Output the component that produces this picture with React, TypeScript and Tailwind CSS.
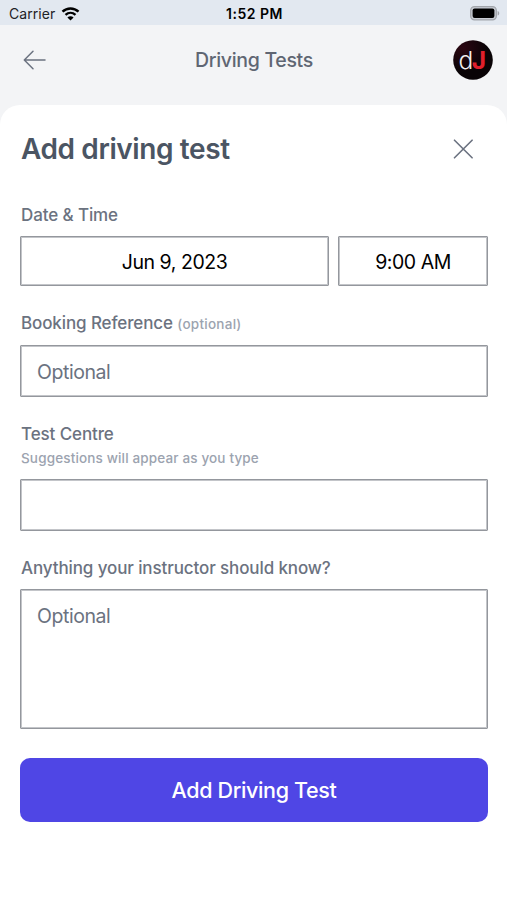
import React, { useState } from 'react';

interface FieldLabelProps {
  htmlFor: string;
  children: React.ReactNode;
}

const FieldLabel: React.FC<FieldLabelProps> = ({ htmlFor, children }) => (
  <label htmlFor={htmlFor} className="block pl-px text-[17px] leading-6 font-medium tracking-[-0.11px] text-[#6b7280]">
    {children}
  </label>
);

const fieldClass =
  'block w-full rounded-[1px] border border-[#94979d] shadow-[inset_0_0_0_1px_#c3c5c9] bg-white px-4 text-[19.5px] tracking-[-0.45px] text-black placeholder:text-[#6b7280] outline-none';

const StatusBar = () => (
  <div className="grid h-[25px] grid-cols-3 items-center bg-[#e2e8f0] pt-0.5 pr-[7px] pl-[9px] text-black">
    <div className="flex items-center gap-1.5">
      <span className="text-[14px] leading-4 tracking-[0.05px] text-[#1f2226]">Carrier</span>
      <svg width="19" height="14" viewBox="0 0 18 14" fill="none">
        <path d="M1 4.7C5.5.4 12.5.4 17 4.7" stroke="currentColor" strokeWidth="2.4" />
        <path d="M4 7.9c2.9-2.7 7.1-2.7 10 0" stroke="currentColor" strokeWidth="2.3" />
        <path d="M9 13.6 5.9 10.4c1.8-1.5 4.4-1.5 6.2 0z" fill="currentColor" />
      </svg>
    </div>
    <span className="text-center text-[14px] leading-4 font-semibold tracking-[0.5px]">1:52 PM</span>
    <svg className="justify-self-end" width="30" height="15" viewBox="0 0 30 15">
      <rect x="0.7" y="0.7" width="25.6" height="13.2" rx="3.8" fill="#c9cdd4" stroke="#a1a5ab" strokeWidth="1.3" />
      <rect x="2.6" y="2.6" width="21.8" height="9.4" rx="2" fill="#000" />
      <path d="M27.6 5c2.2.6 2.2 4 0 4.6z" fill="#a1a5ab" />
    </svg>
  </div>
);

const Header = () => (
  <header className="flex h-[80px] items-center justify-between pr-[14px] pb-[10px] pl-[23px]">
    <button title="Back" className="w-8 text-[#6b7280]">
      <svg width="24" height="20" viewBox="0 0 24 20" fill="none" stroke="currentColor" strokeWidth="1.5" strokeLinecap="round" strokeLinejoin="round">
        <path d="M10 1.3 1.3 10 10 18.7M1.6 10H22" />
      </svg>
    </button>
    <h1 className="text-[19.5px] leading-6 font-medium tracking-[-0.32px] text-[#5f6673]">Driving Tests</h1>
    <svg width="40" height="40" viewBox="0 0 40 40">
      <defs>
        <radialGradient id="avatar" cx="0.25" cy="0.2" r="0.6">
          <stop offset="0" stopColor="#2b0612" />
          <stop offset="1" stopColor="#090306" />
        </radialGradient>
      </defs>
      <circle cx="20" cy="20" r="19.8" fill="url(#avatar)" />
      <text x="5.4" y="28.6" fill="#f3eef0" className="font-['Inter',sans-serif] text-[24.5px]">
        <tspan className="font-light">d</tspan>
        <tspan dx="-1.4" fill="#e01f2b" className="font-bold">J</tspan>
      </text>
    </svg>
  </header>
);

export default function App() {
  const [date, setDate] = useState('Jun 9, 2023');
  const [time, setTime] = useState('9:00 AM');
  const [reference, setReference] = useState('');
  const [centre, setCentre] = useState('');
  const [notes, setNotes] = useState('');

  return (
    <div className="flex h-[900px] w-full flex-col bg-[#f3f4f6] font-['Inter',sans-serif]">
      <StatusBar />
      <Header />

      <main className="flex-1 rounded-t-[20px] bg-white pr-[19px] pl-5">
        <div className="flex h-[88px] items-center justify-between pr-[13px] pl-px">
          <h2 className="text-[28px] leading-9 font-semibold tracking-[-0.4px] text-[#4b5563]">Add driving test</h2>
          <button title="Close" className="p-0.5 text-[#6b7280]">
            <svg width="20" height="20" viewBox="0 0 20 20" fill="none" stroke="currentColor" strokeWidth="1.6" strokeLinecap="round">
              <path d="m1.5 1.2 17.6 17.6M19.1 1.2 1.5 18.8" />
            </svg>
          </button>
        </div>

        <form onSubmit={e => e.preventDefault()}>
          <section className="pt-[10px]">
            <FieldLabel htmlFor="date">Date &amp; Time</FieldLabel>
            <div className="mt-[9px] flex gap-[9px]">
              <input id="date" value={date} onChange={e => setDate(e.target.value)} className={`${fieldClass} h-[50px] flex-1 pt-0.5 text-center`} />
              <div className="w-[150px] shrink-0">
                <input value={time} onChange={e => setTime(e.target.value)} className={`${fieldClass} h-[50px] pt-0.5 text-center`} />
              </div>
            </div>
          </section>

          <section className="pt-[25px]">
            <FieldLabel htmlFor="reference">
              Booking Reference <span className="text-[13.5px] tracking-[0.25px] text-[#9ca3af]">(optional)</span>
            </FieldLabel>
            <input
              id="reference"
              placeholder="Optional"
              value={reference}
              onChange={e => setReference(e.target.value)}
              className={`${fieldClass} mt-[9px] h-[52px] pt-0.5`}
            />
          </section>

          <section className="pt-[25px]">
            <FieldLabel htmlFor="centre">Test Centre</FieldLabel>
            <p className="pl-px text-[13.5px] leading-6 font-medium tracking-[0.15px] text-[#9ca3af]">Suggestions will appear as you type</p>
            <input
              id="centre"
              value={centre}
              onChange={e => setCentre(e.target.value)}
              className={`${fieldClass} mt-[9px] h-[52px]`}
            />
          </section>

          <section className="pt-[25px]">
            <FieldLabel htmlFor="notes">Anything your instructor should know?</FieldLabel>
            <textarea
              id="notes"
              placeholder="Optional"
              value={notes}
              onChange={e => setNotes(e.target.value)}
              className={`${fieldClass} mt-[9px] h-[140px] resize-none pt-3 leading-[28px]`}
            />
          </section>

          <button className="mt-[29px] h-16 w-full rounded-[10px] bg-[#4f46e5] text-[21.5px] font-medium tracking-[-0.35px] text-white">
            Add Driving Test
          </button>
        </form>
      </main>
    </div>
  );
}
